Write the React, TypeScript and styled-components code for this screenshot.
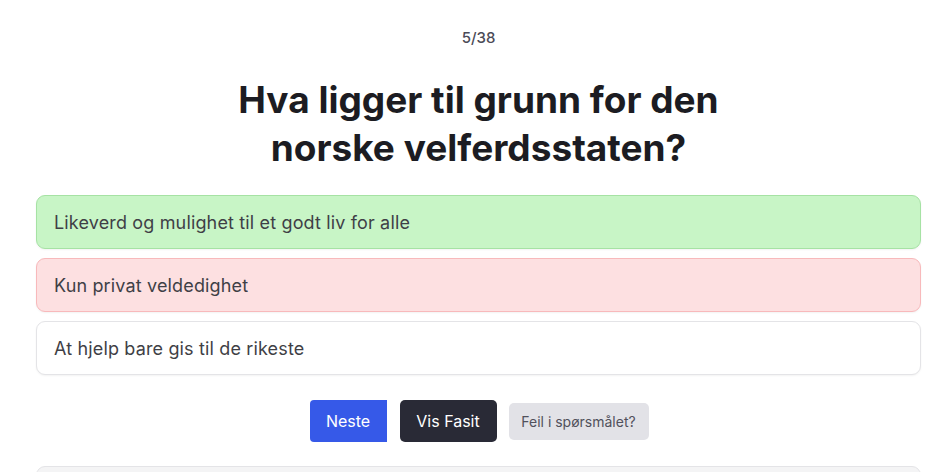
import React from "react";
import styled, { createGlobalStyle } from "styled-components";

const GlobalStyle = createGlobalStyle`
  html, body {
    margin: 0;
    padding: 0;
    background: #ffffff;
    font-family: Inter, "Noto Sans", "Liberation Sans", sans-serif;
    -webkit-font-smoothing: antialiased;
  }
  * { box-sizing: border-box; }
`;

type Status = "correct" | "wrong" | "neutral";

const answers: { text: string; status: Status }[] = [
  { text: "Likeverd og mulighet til et godt liv for alle", status: "correct" },
  { text: "Kun privat veldedighet", status: "wrong" },
  { text: "At hjelp bare gis til de rikeste", status: "neutral" },
];

export default function App() {
  return (
    <>
      <GlobalStyle />
      <Page>
        <Counter>5/38</Counter>
        <Question>Hva ligger til grunn for den norske velferdsstaten?</Question>
        <Options>
          {answers.map((a) => (
            <Option key={a.text} $status={a.status}>
              {a.text}
            </Option>
          ))}
        </Options>
        <Actions>
          <PrimaryButton>Neste</PrimaryButton>
          <DarkButton>Vis Fasit</DarkButton>
          <ReportButton>Feil i spørsmålet?</ReportButton>
        </Actions>
        <NextCard />
      </Page>
    </>
  );
}

const Page = styled.main`
  display: flex;
  flex-direction: column;
  align-items: center;
  padding: 28px 30px 0 36px;
  height: 472px;
  overflow: hidden;
`;

const Counter = styled.div`
  font-size: 15px;
  line-height: 20px;
  font-weight: 500;
  color: #4b4b57;
`;

const Question = styled.h1`
  margin: 28px 0 0;
  max-width: 540px;
  text-align: center;
  font-size: 37px;
  line-height: 48px;
  font-weight: 700;
  color: #1c1c22;
`;

const Options = styled.div`
  width: 100%;
  margin-top: 23px;
  display: flex;
  flex-direction: column;
  gap: 9px;
`;

const statusColors: Record<Status, { bg: string; border: string }> = {
  correct: { bg: "#c8f5c6", border: "#a6e2a4" },
  wrong: { bg: "#fde0e1", border: "#f8b9bb" },
  neutral: { bg: "#ffffff", border: "#e4e4e7" },
};

const Option = styled.div<{ $status: Status }>`
  height: 54px;
  flex-shrink: 0;
  display: flex;
  align-items: center;
  padding: 0 17px;
  border-radius: 9px;
  border: 1px solid ${(p) => statusColors[p.$status].border};
  background: ${(p) => statusColors[p.$status].bg};
  box-shadow: 0 1px 2px rgba(0, 0, 0, 0.05);
  font-size: 18px;
  letter-spacing: 0.15px;
  color: #3f3f46;
`;

const Actions = styled.div`
  margin-top: 25px;
  display: flex;
  align-items: center;
  gap: 13px;
  padding-left: 1px;
  flex-shrink: 0;
`;

const BaseButton = styled.button`
  border: none;
  font-family: inherit;
  cursor: pointer;
  height: 42px;
  padding: 0 16px;
  font-size: 16px;
  font-weight: 400;
  color: #ffffff;
`;

const PrimaryButton = styled(BaseButton)`
  width: 77px;
  background: #3659e8;
  border-radius: 4px 0 0 4px;
`;

const DarkButton = styled(BaseButton)`
  width: 97px;
  background: #292a36;
  border-radius: 5px;
`;

const ReportButton = styled.button`
  margin-left: -1px;
  height: 37px;
  width: 140px;
  border: none;
  border-radius: 5px;
  background: #e2e2e7;
  color: #51515c;
  font-family: inherit;
  font-size: 14px;
  font-weight: 400;
  cursor: pointer;
`;

const NextCard = styled.div`
  width: 100%;
  margin-top: 24px;
  height: 60px;
  flex-shrink: 0;
  background: #f4f4f5;
  border: 1px solid #e4e4e7;
  border-radius: 9px;
`;
